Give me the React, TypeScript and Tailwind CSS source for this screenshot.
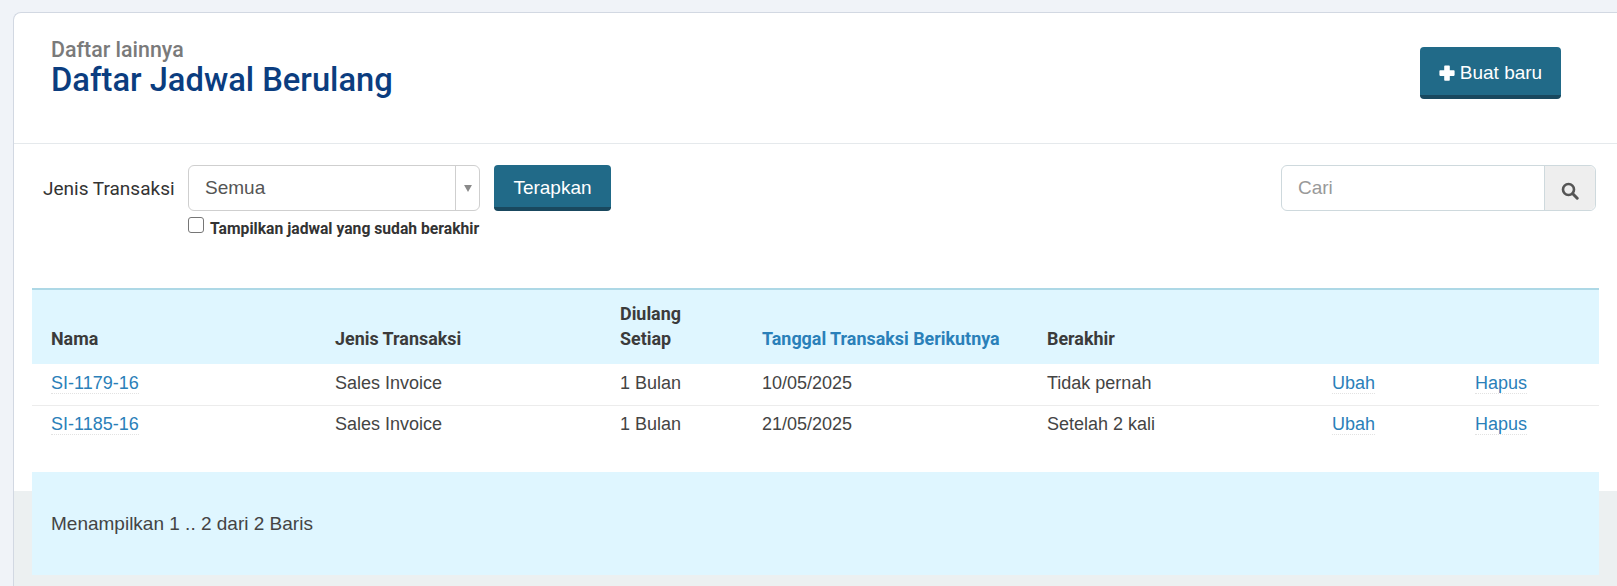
const rows = [
  ["SI-1179-16", "Sales Invoice", "1 Bulan", "10/05/2025", "Tidak pernah"],
  ["SI-1185-16", "Sales Invoice", "1 Bulan", "21/05/2025", "Setelah 2 kali"],
];

const link = "text-[#2a80b9] border-b border-dotted border-[#e2e2e2]";
const btn =
  "bg-[#216a88] text-white rounded-[4px] border-b-[4px] border-[#19485e] font-['Liberation_Sans',sans-serif] pt-[5px]";

export default function App() {
  return (
    <div className="h-[586px] overflow-hidden bg-[#f0f3f8] pl-[13px] pt-3 font-['Liberation_Sans',sans-serif] text-[#444]">
      <div className="h-[574px] flex flex-col bg-white border-l border-t border-[#d2d8e2] rounded-tl-[8px] relative">
        <header className="h-[131px] shrink-0 flex justify-between border-b border-[#e5e9ec] pl-[37px] pr-[56px]">
          <div className="pt-[25px] font-['Roboto',sans-serif]">
            <div className="text-[21.4px] leading-[23px] font-medium text-[#7a7a7a]">Daftar lainnya</div>
            <h1 className="text-[32.7px] leading-[38px] font-medium text-[#0b3d7f]">Daftar Jadwal Berulang</h1>
          </div>
          <button className={`${btn} mt-[34px] w-[141px] h-[52px] text-[19px] flex items-center justify-center gap-[5px]`}>
            <svg width="16" height="16" viewBox="0 0 16 16" aria-hidden="true" className="-mt-[2px]">
              <path d="M6 0.5h4a0.8 0.8 0 0 1 .8.8v4h4a.8.8 0 0 1 .8.8v4a.8.8 0 0 1-.8.8h-4v4a.8.8 0 0 1-.8.8H6a.8.8 0 0 1-.8-.8v-4h-4a.8.8 0 0 1-.8-.8V6a.8.8 0 0 1 .8-.8h4v-4A.8.8 0 0 1 6 .5z" fill="#fff" />
            </svg>
            Buat baru
          </button>
        </header>

        <section className="h-[144px] shrink-0 flex justify-between pt-[21px] pl-[29px] pr-[21px]">
          <div className="flex items-start">
            <label className="font-['Roboto',sans-serif] text-[19px] leading-[48px] text-[#333] w-[145px]">Jenis Transaksi</label>
            <div>
              <div className="w-[292px] h-[46px] border border-[#cfcfcf] rounded-[6px] flex items-stretch text-[19px] text-[#555]">
                <div className="flex-1 pl-4 leading-[44px]">Semua</div>
                <div className="w-[24px] border-l border-[#cfcfcf] flex items-center justify-center">
                  <svg width="8" height="7" viewBox="0 0 9 8"><path d="M0 0h9L4.5 8z" fill="#8a8a8a" /></svg>
                </div>
              </div>
              <div className="flex items-start mt-[6px] h-[24px]">
                <span className="w-4 h-4 border border-[#767676] rounded-[3px] bg-white mr-[6px] shrink-0" />
                <span className="font-['Roboto',sans-serif] text-[15.7px] leading-[20px] mt-[2px] font-bold text-[#333] whitespace-nowrap">Tampilkan jadwal yang sudah berakhir</span>
              </div>
            </div>
            <button className={`${btn} ml-[14px] w-[117px] h-[46px] text-[19px]`}>Terapkan</button>
          </div>
          <div className="w-[315px] h-[46px] flex border border-[#ced9dd] rounded-[6px]">
            <div className="flex-1 pl-4 text-[19px] leading-[44px] text-[#999]">Cari</div>
            <div className="w-[51px] bg-[#eeeeee] border-l border-[#ced9dd] rounded-r-[6px] flex items-center justify-center pt-[6px]">
              <svg width="18" height="18" viewBox="0 0 18 18" fill="none" stroke="#555" aria-hidden="true">
                <circle cx="7.5" cy="7.5" r="5.5" strokeWidth="2.6" />
                <path d="M11.8 11.8L16.2 16.2" strokeWidth="3" strokeLinecap="round" />
              </svg>
            </div>
          </div>
        </section>

        <div className="pl-[18px] pr-[18px] w-[1604px]">
          <table className="w-[1567px] table-fixed border-collapse text-[18px]">
            <colgroup>
              <col className="w-[285px]" />
              <col className="w-[285px]" />
              <col className="w-[142px]" />
              <col className="w-[285px]" />
              <col className="w-[285px]" />
              <col className="w-[143px]" />
              <col className="w-[142px]" />
            </colgroup>
            <thead>
              <tr className="bg-[#dff6ff] h-[75px] border-t-2 border-[#add8e6] font-['Roboto',sans-serif] text-[17.9px] leading-[25px] text-left text-[#3b3b3b]">
                <th className="pl-[19px] align-bottom pb-[13px] font-bold">Nama</th>
                <th className="pl-[18px] align-bottom pb-[13px] font-bold">Jenis Transaksi</th>
                <th className="pl-[18px] align-bottom pb-[13px] font-bold">Diulang<br />Setiap</th>
                <th className="pl-[18px] align-bottom pb-[13px] font-bold text-[#2a80b9]">Tanggal Transaksi Berikutnya</th>
                <th className="pl-[18px] align-bottom pb-[13px] font-bold">Berakhir</th>
                <th />
                <th />
              </tr>
            </thead>
            <tbody>
              {rows.map((r) => (
                <tr key={r[0]} className="h-[41px] border-b border-[#ececec] last:border-b-0">
                  <td className="pl-[19px] pb-[2px]"><span className={link}>{r[0]}</span></td>
                  <td className="pl-[18px] pb-[2px]">{r[1]}</td>
                  <td className="pl-[18px] pb-[2px]">{r[2]}</td>
                  <td className="pl-[18px] pb-[2px]">{r[3]}</td>
                  <td className="pl-[18px] pb-[2px]">{r[4]}</td>
                  <td className="pl-[18px] pb-[2px]"><span className={link}>Ubah</span></td>
                  <td className="pl-[18px] pb-[2px]"><span className={link}>Hapus</span></td>
                </tr>
              ))}
            </tbody>
          </table>
        </div>

        <div className="flex-1 mt-[45px] bg-[#ecf0f1] relative">
          <div className="absolute left-[18px] top-[-19px] w-[1567px] h-[103px] bg-[#dff6ff] flex items-center pl-[19px] pt-[2px] text-[19px]">
            Menampilkan 1 .. 2 dari 2 Baris
          </div>
        </div>
      </div>
    </div>
  );
}
